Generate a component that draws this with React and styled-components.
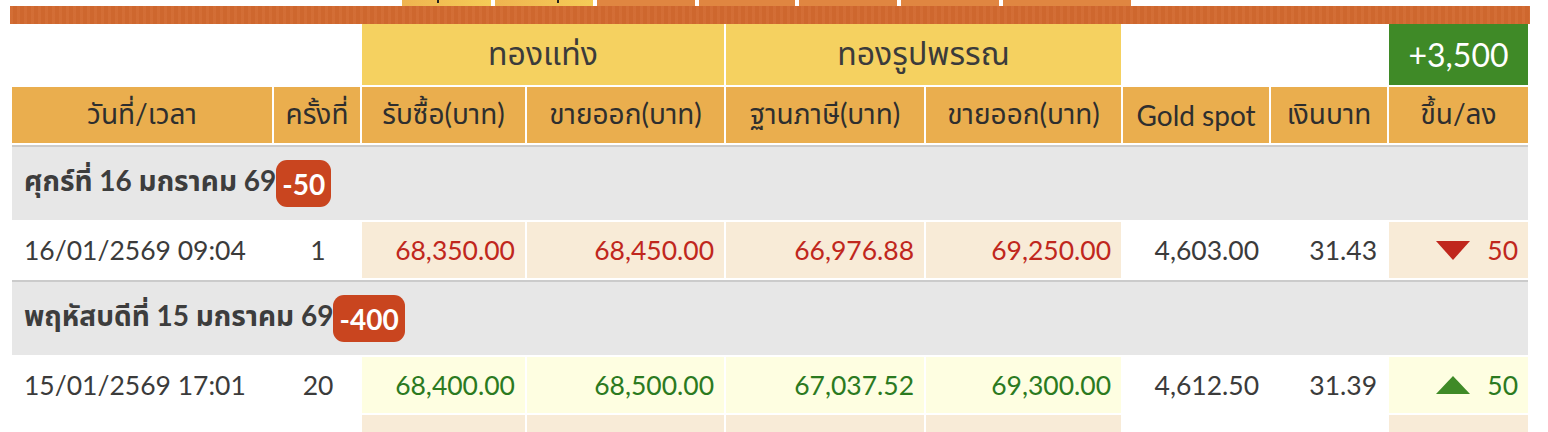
import React from 'react';
import styled, { createGlobalStyle } from 'styled-components';

const GlobalStyle = createGlobalStyle`
  body {
    margin: 0;
    background: #fff;
    font-family: Lato, "Noto Sans Thai", "Noto Sans", sans-serif;
    color: #3b3b3b;
  }
`;

const Page = styled.div`
  width: 1520px;
  padding-left: 10px;
`;

const Tabs = styled.div`
  display: flex;
  gap: 4px;
  height: 6px;
  padding-left: 392px;
`;

const Tab = styled.div`
  width: ${p => p.w}px;
  height: 6px;
  position: relative;
  background: ${p => (p.active ? 'linear-gradient(to right, #efb450, #f5cc57)' : '#e08641')};
  &::after {
    content: '';
    display: ${p => (p.mark ? 'block' : 'none')};
    position: absolute;
    left: ${p => p.mark}px;
    top: 0;
    width: 2px;
    height: 3px;
    background: #222;
  }
`;

const Bar = styled.div`
  height: 18px;
  background: #d2692f;
  background-image: repeating-linear-gradient(90deg, rgba(255,255,255,0.03) 0 3px, rgba(0,0,0,0.02) 3px 7px);
`;

const Table = styled.table`
  width: 1520px;
  margin-top: -2px;
  border-collapse: separate;
  border-spacing: 2px;
  table-layout: fixed;
  font-size: 26.5px;
`;

const GroupTh = styled.th`
  box-sizing: border-box;
  height: 61px;
  padding: 0;
  font-weight: 400;
  text-align: center;
  font-size: 32px;
  color: ${p => (p.tone === 'green' ? '#fff' : '#3b3b3b')};
  background: ${p => (p.tone === 'yellow' ? '#f5d160' : p.tone === 'green' ? '#3f8a27' : '#fff')};
`;

const HeadTh = styled.th`
  box-sizing: border-box;
  height: 56px;
  padding: 0;
  font-weight: 400;
  font-size: 28px;
  text-align: center;
  color: #2e2e2e;
  background: #eaae4e;
  white-space: nowrap;
`;

const DayTd = styled.td`
  box-sizing: border-box;
  height: 75px;
  padding: 0 0 0 12px;
  background: #e7e7e7;
  border-top: 2px solid #cbcbcb;
  font-weight: 700;
  font-size: 28px;
  color: #3d3d3d;
`;

const Badge = styled.span`
  display: inline-flex;
  align-items: center;
  vertical-align: middle;
  height: 47px;
  padding: 0 6px;
  border-radius: 11px;
  background: #c9451f;
  color: #fff;
  font-weight: 700;
  font-size: 28px;
`;

const Td = styled.td`
  box-sizing: border-box;
  height: 56px;
  padding: 0 10px 0 12px;
  white-space: nowrap;
  text-align: ${p => p.align || 'right'};
  background: ${p => (!p.fill ? '#fff' : p.tone === 'up' ? '#fefee1' : '#f8ebd7')};
  color: ${p => (!p.fill ? '#3b3b3b' : p.tone === 'up' ? '#2b7a1f' : '#c0271d')};
`;

const Change = styled.span`
  display: inline-flex;
  align-items: center;
  gap: 17px;
`;

const Arrow = ({ dir }) => (
  <svg width="34" height="19" viewBox="0 0 34 19">
    {dir === 'up' ? (
      <polygon points="17,0 34,18 0,18" fill="#3f8a27" />
    ) : (
      <polygon points="0,0 34,0 17,19" fill="#c0271d" />
    )}
  </svg>
);

const days = [
  {
    label: 'ศุกร์ที่ 16 มกราคม 69',
    diff: '-50',
    rows: [
      { time: '16/01/2569 09:04', n: '1', tone: 'down', v: ['68,350.00', '68,450.00', '66,976.88', '69,250.00'], spot: '4,603.00', thb: '31.43', chg: '50' },
    ],
  },
  {
    label: 'พฤหัสบดีที่ 15 มกราคม 69',
    diff: '-400',
    rows: [
      { time: '15/01/2569 17:01', n: '20', tone: 'up', v: ['68,400.00', '68,500.00', '67,037.52', '69,300.00'], spot: '4,612.50', thb: '31.39', chg: '50' },
      { time: '15/01/2569 16:46', n: '19', tone: 'down', v: ['68,350.00', '68,450.00', '66,976.88', '69,250.00'], spot: '4,608.00', thb: '31.40', chg: '50' },
    ],
  },
];

const widths = [260, 86, 163, 197, 198, 195, 146, 116, 139];

export default function App() {
  return (
    <Page>
      <GlobalStyle />
      <Tabs>
        <Tab w={89} active mark={35} />
        <Tab w={98} active mark={62} />
        <Tab w={98} />
        <Tab w={96} />
        <Tab w={98} />
        <Tab w={98} />
        <Tab w={128} />
      </Tabs>
      <Bar />
      <Table>
        <colgroup>
          {widths.map((w, i) => <col key={i} style={{ width: w }} />)}
        </colgroup>
        <thead>
          <tr>
            <GroupTh colSpan={2} />
            <GroupTh colSpan={2} tone="yellow">ทองแท่ง</GroupTh>
            <GroupTh colSpan={2} tone="yellow">ทองรูปพรรณ</GroupTh>
            <GroupTh colSpan={2} />
            <GroupTh tone="green">+3,500</GroupTh>
          </tr>
          <tr>
            <HeadTh>วันที่/เวลา</HeadTh>
            <HeadTh>ครั้งที่</HeadTh>
            <HeadTh>รับซื้อ(บาท)</HeadTh>
            <HeadTh>ขายออก(บาท)</HeadTh>
            <HeadTh>ฐานภาษี(บาท)</HeadTh>
            <HeadTh>ขายออก(บาท)</HeadTh>
            <HeadTh>Gold spot</HeadTh>
            <HeadTh>เงินบาท</HeadTh>
            <HeadTh>ขึ้น/ลง</HeadTh>
          </tr>
        </thead>
        <tbody>
          {days.map(day => (
            <React.Fragment key={day.label}>
              <tr>
                <DayTd colSpan={9}>
                  {day.label}<Badge>{day.diff}</Badge>
                </DayTd>
              </tr>
              {day.rows.map(r => (
                <tr key={r.time}>
                  <Td align="left">{r.time}</Td>
                  <Td align="center">{r.n}</Td>
                  {r.v.map((v, i) => (
                    <Td key={i} fill="1" tone={r.tone}>{v}</Td>
                  ))}
                  <Td>{r.spot}</Td>
                  <Td>{r.thb}</Td>
                  <Td fill="1" tone={r.tone}>
                    <Change><Arrow dir={r.tone} />{r.chg}</Change>
                  </Td>
                </tr>
              ))}
            </React.Fragment>
          ))}
        </tbody>
      </Table>
    </Page>
  );
}
